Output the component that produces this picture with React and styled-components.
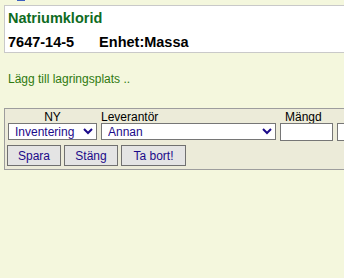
import React from "react";
import styled, { createGlobalStyle } from "styled-components";

const Global = createGlobalStyle`
  html, body { margin: 0; padding: 0; }
  body {
    background: #f4f7dd;
    font-family: "Liberation Sans", Arial, sans-serif;
    overflow: hidden;
    width: 344px;
    height: 278px;
  }
`;

const Page = styled.div`
  display: flex;
  flex-direction: column;
  width: 420px;
`;

const Crumb = styled.div`
  height: 2px;
  overflow: hidden;
  display: flex;
  align-items: flex-end;
  padding-left: 17px;
  font-size: 12px;
  color: #22227a;
`;

const CrumbInner = styled.div`
  display: flex;
  gap: 3px;
  align-items: center;
  margin-top: -11px;
  line-height: 13px;
`;

const CrumbIcon = styled.span`
  width: 8px;
  height: 10px;
  background: #3b5fc0;
`;

const HeaderBox = styled.div`
  margin: 3px 0 0 4px;
  background: #ffffff;
  border: 1px solid #c9c9c9;
  height: 48px;
  padding: 4px 0 0 3px;
  box-sizing: border-box;
  display: flex;
  flex-direction: column;
`;

const Title = styled.div`
  font-weight: bold;
  font-size: 14.5px;
  line-height: 17px;
  color: #0f6b1f;
`;

const InfoRow = styled.div`
  display: flex;
  gap: 25px;
  margin-top: 7px;
  font-weight: bold;
  font-size: 14.5px;
  line-height: 17px;
  color: #000;
`;

const AddLink = styled.div`
  margin: 19px 0 0 8px;
  font-size: 12px;
  line-height: 14px;
  color: #2f7a10;
`;

const Fieldset = styled.div`
  margin: 22px 0 0 4px;
  background: #ecebd9;
  border: 1px solid #9d9d9d;
  height: 62px;
  box-sizing: border-box;
  padding: 0 0 0 3px;
  display: flex;
  flex-direction: column;
`;

const FormGrid = styled.div`
  display: grid;
  grid-template-columns: 89px 175px 53px 53px;
  column-gap: 4px;
  align-items: start;
`;

const Label = styled.div`
  font-size: 12px;
  line-height: 16px;
  height: 14px;
  color: #000;
  text-align: ${(p) => p.$align || "left"};
  padding-left: ${(p) => p.$pad || 0}px;
`;

const Select = styled.select`
  font-family: "Liberation Sans", Arial, sans-serif;
  font-size: 12px;
  color: #1b0a8a;
  height: 17px;
  margin: 0;
  padding: 0 0 0 2px;
  border: 1px solid #767676;
  border-radius: 0;
  background: #fff;
  box-sizing: border-box;
  width: 100%;
`;

const Input = styled.input`
  height: 18px;
  margin: 0;
  padding: 0;
  border: 1px solid #767676;
  border-radius: 0;
  background: #fff;
  box-sizing: border-box;
  width: 100%;
`;

const Buttons = styled.div`
  display: flex;
  gap: 3px;
  margin: 4px 0 0 -1px;
`;

const Button = styled.button`
  font-family: "Liberation Sans", Arial, sans-serif;
  font-size: 12px;
  color: #1b0a8a;
  height: 21px;
  width: ${(p) => p.$w}px;
  padding: 0;
  margin: 0;
  border: 1px solid #707070;
  border-radius: 0;
  background: #e4e4e4;
  box-sizing: border-box;
`;

export default function App() {
  return (
    <>
      <Global />
      <Page>
        <Crumb>
          <CrumbInner>
            <CrumbIcon />
            <span>Natriumklorid</span>
          </CrumbInner>
        </Crumb>
        <HeaderBox>
          <Title>Natriumklorid</Title>
          <InfoRow>
            <span>7647-14-5</span>
            <span>Enhet:Massa</span>
          </InfoRow>
        </HeaderBox>
        <AddLink>Lägg till lagringsplats ..</AddLink>
        <Fieldset>
          <FormGrid>
            <Label $align="center">NY</Label>
            <Label>Leverantör</Label>
            <Label $pad={5}>Mängd</Label>
            <Label />
            <Select defaultValue="inv">
              <option value="inv">Inventering</option>
            </Select>
            <Select defaultValue="annan">
              <option value="annan">Annan</option>
            </Select>
            <Input />
            <Input />
          </FormGrid>
          <Buttons>
            <Button $w={54}>Spara</Button>
            <Button $w={54}>Stäng</Button>
            <Button $w={65}>Ta bort!</Button>
          </Buttons>
        </Fieldset>
      </Page>
    </>
  );
}
